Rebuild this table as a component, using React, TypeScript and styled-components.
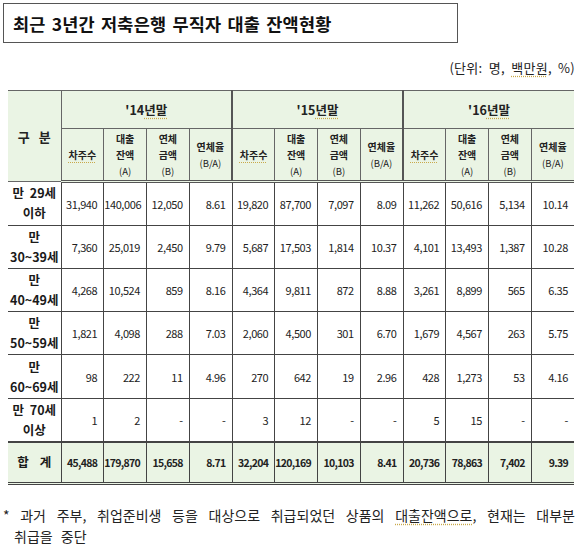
import React from "react";
import styled, { createGlobalStyle } from "styled-components";

const Global = createGlobalStyle`
  html, body { margin: 0; padding: 0; background: #fff; }
  body { font-family: "Noto Sans CJK KR", "Noto Sans", sans-serif; color: #1a1a1a; }
`;

const Page = styled.div`
  width: 580px;
  height: 547px;
  box-sizing: border-box;
  padding: 3px 5px 0 3px;
  display: flex;
  flex-direction: column;
`;

const TitleBox = styled.div`
  width: 455px;
  height: 42px;
  box-sizing: border-box;
  border: 1px solid #555;
  display: flex;
  align-items: center;
  padding-left: 9px;
  font-size: 17.5px;
  font-weight: 700;
  letter-spacing: 0.2px;
  word-spacing: 2px;
  color: #111;
`;

const Unit = styled.div`
  align-self: flex-end;
  margin-top: 15px;
  font-size: 13px;
  word-spacing: 3px;
  letter-spacing: 0.3px;
  color: #222;
`;

const Squiggle = styled.span`
  text-decoration: underline dotted #c9a94a;
  text-underline-offset: 3px;
`;

const Table = styled.table`
  margin-top: 13px;
  margin-left: 5px;
  width: 566px;
  border-collapse: collapse;
  table-layout: fixed;
  border-top: 1px solid #555;
  border-bottom: 3px double #444;
`;

const HeadCell = styled.th<{ $group?: boolean }>`
  background: #eaf4e4;
  border: 1px solid #666;
  border-left: ${(p) => (p.$group ? "2px solid #555" : "1px solid #666")};
  font-weight: 700;
  padding: 0;
  color: #222;
  &:first-child { border-left: none; }
  &:last-child { border-right: none; }
`;

const CornerCell = styled(HeadCell)`
  font-size: 13px;
  word-spacing: 6px;
  border-left: none;
`;

const YearCell = styled(HeadCell)`
  height: 37px;
  font-size: 12.5px;
  border-right: none;
`;

const SubCell = styled(HeadCell)`
  height: 51px;
  font-size: 10px;
  line-height: 16px;
  border-bottom: 3px double #555;
`;

const Paren = styled.span`
  font-weight: 400;
  font-size: 9.5px;
`;

const Row = styled.tr<{ $total?: boolean }>`
  height: ${(p) => (p.$total ? "42px" : "43.3px")};
  background: ${(p) => (p.$total ? "#eaf4e4" : "#fff")};
  border-top: ${(p) => (p.$total ? "2px solid #444" : "1px solid #444")};
`;

const Label = styled.td<{ $total?: boolean }>`
  border: 1px solid #444;
  border-left: none;
  text-align: center;
  font-weight: 700;
  font-size: 12.5px;
  line-height: 20px;
  word-spacing: ${(p) => (p.$total ? "8px" : "3px")};
  padding: 0;
  color: #1a1a1a;
`;

const Num = styled.td<{ $total?: boolean }>`
  border: 1px solid #444;
  text-align: right;
  padding: 0 6px 0 0;
  font-size: ${(p) => (p.$total ? "10.5px" : "11px")};
  font-weight: ${(p) => (p.$total ? 700 : 400)};
  letter-spacing: ${(p) => (p.$total ? "-0.7px" : "-0.4px")};
  color: #222;
  white-space: nowrap;
  &:last-child { border-right: none; }
`;

const Note = styled.div`
  margin-top: 20px;
  padding-left: 11px;
  text-indent: -11px;
  font-size: 14px;
  line-height: 21px;
  word-spacing: 5px;
  word-break: keep-all;
  text-align: justify;
  color: #222;
  width: 561px;
`;

type RowData = { label: [string, string]; values: string[] };

const rows: RowData[] = [
  { label: ["만 29세", "이하"], values: ["31,940", "140,006", "12,050", "8.61", "19,820", "87,700", "7,097", "8.09", "11,262", "50,616", "5,134", "10.14"] },
  { label: ["만", "30~39세"], values: ["7,360", "25,019", "2,450", "9.79", "5,687", "17,503", "1,814", "10.37", "4,101", "13,493", "1,387", "10.28"] },
  { label: ["만", "40~49세"], values: ["4,268", "10,524", "859", "8.16", "4,364", "9,811", "872", "8.88", "3,261", "8,899", "565", "6.35"] },
  { label: ["만", "50~59세"], values: ["1,821", "4,098", "288", "7.03", "2,060", "4,500", "301", "6.70", "1,679", "4,567", "263", "5.75"] },
  { label: ["만", "60~69세"], values: ["98", "222", "11", "4.96", "270", "642", "19", "2.96", "428", "1,273", "53", "4.16"] },
  { label: ["만 70세", "이상"], values: ["1", "2", "-", "-", "3", "12", "-", "-", "5", "15", "-", "-"] },
];

const total = ["45,488", "179,870", "15,658", "8.71", "32,204", "120,169", "10,103", "8.41", "20,736", "78,863", "7,402", "9.39"];

const years = ["'14", "'15", "'16"];

const SubHeaders = ({ group }: { group: boolean }) => (
  <>
    <SubCell $group={group}>
      <Squiggle>차주수</Squiggle>
    </SubCell>
    <SubCell>
      대출<br />잔액<br /><Paren>(A)</Paren>
    </SubCell>
    <SubCell>
      연체<br />금액<br /><Paren>(B)</Paren>
    </SubCell>
    <SubCell>
      연체율<br /><Paren>(B/A)</Paren>
    </SubCell>
  </>
);

export default function App() {
  return (
    <>
      <Global />
      <Page>
        <TitleBox>최근 3년간 저축은행 무직자 대출 잔액현황</TitleBox>
        <Unit>
          (단위: 명, <Squiggle>백만원</Squiggle>, %)
        </Unit>
        <Table>
          <colgroup>
            <col style={{ width: 53 }} />
            {Array.from({ length: 12 }).map((_, i) => (
              <col key={i} />
            ))}
          </colgroup>
          <thead>
            <tr>
              <CornerCell rowSpan={2}>구 분</CornerCell>
              {years.map((y, i) => (
                <YearCell key={y} colSpan={4} $group={i > 0}>
                  {y}
                  <Squiggle>년말</Squiggle>
                </YearCell>
              ))}
            </tr>
            <tr>
              {years.map((y, i) => (
                <SubHeaders key={y} group={i > 0} />
              ))}
            </tr>
          </thead>
          <tbody>
            {rows.map((r) => (
              <Row key={r.label.join("")}>
                <Label>
                  {r.label[0]}
                  <br />
                  {r.label[1]}
                </Label>
                {r.values.map((v, i) => (
                  <Num key={i}>{v}</Num>
                ))}
              </Row>
            ))}
            <Row $total>
              <Label $total>합 계</Label>
              {total.map((v, i) => (
                <Num key={i} $total>
                  {v}
                </Num>
              ))}
            </Row>
          </tbody>
        </Table>
        <Note>
          * 과거 주부, 취업준비생 등을 대상으로 취급되었던 상품의 <Squiggle>대출잔액으로</Squiggle>, 현재는 대부분
          취급을 중단
        </Note>
      </Page>
    </>
  );
}
